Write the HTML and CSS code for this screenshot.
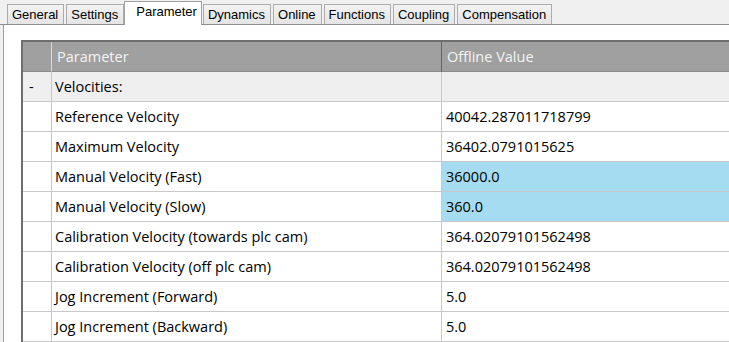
FILE: index.html
```html
<!DOCTYPE html>
<html lang="en">
<head>
  <meta charset="UTF-8" />
  <meta name="viewport" content="width=device-width, initial-scale=1.0" />
  <title>Axis Parameter</title>
  <link rel="stylesheet" href="styles.css">
</head>
<body>

  <!-- Abas -->
  <div class="tabs">
    <div class="tab">General</div>
    <div class="tab">Settings</div>
    <div class="tab active">Parameter</div>
    <div class="tab">Dynamics</div>
    <div class="tab">Online</div>
    <div class="tab">Functions</div>
    <div class="tab">Coupling</div>
    <div class="tab">Compensation</div>
  </div>

  <div class="panel">
    <div class="grid">
      <div class="row head">
        <div class="cell c1"></div>
        <div class="cell c2">Parameter</div>
        <div class="cell c3">Offline Value</div>
      </div>

      <div class="row group">
        <div class="cell c1">-</div>
        <div class="cell c2">Velocities:</div>
        <div class="cell c3"></div>
      </div>

      <div class="row">
        <div class="cell c1"></div>
        <div class="cell c2">Reference Velocity</div>
        <div class="cell c3">40042.287011718799</div>
      </div>
      <div class="row">
        <div class="cell c1"></div>
        <div class="cell c2">Maximum Velocity</div>
        <div class="cell c3">36402.0791015625</div>
      </div>
      <div class="row">
        <div class="cell c1"></div>
        <div class="cell c2">Manual Velocity (Fast)</div>
        <div class="cell c3 selected">36000.0</div>
      </div>
      <div class="row">
        <div class="cell c1"></div>
        <div class="cell c2">Manual Velocity (Slow)</div>
        <div class="cell c3 selected">360.0</div>
      </div>
      <div class="row">
        <div class="cell c1"></div>
        <div class="cell c2">Calibration Velocity (towards plc cam)</div>
        <div class="cell c3">364.02079101562498</div>
      </div>
      <div class="row">
        <div class="cell c1"></div>
        <div class="cell c2">Calibration Velocity (off plc cam)</div>
        <div class="cell c3">364.02079101562498</div>
      </div>
      <div class="row">
        <div class="cell c1"></div>
        <div class="cell c2">Jog Increment (Forward)</div>
        <div class="cell c3">5.0</div>
      </div>
      <div class="row">
        <div class="cell c1"></div>
        <div class="cell c2">Jog Increment (Backward)</div>
        <div class="cell c3">5.0</div>
      </div>
    </div>
  </div>

</body>
</html>
```

FILE: styles.css
```css
/* janela base */
body {
  margin: 0;
  background: #f0f0f0;
  overflow: hidden;
  height: 342px;
}

/* barra de abas */
.tabs {
  display: flex;
  align-items: flex-end;
  height: 24px;
  padding-left: 7px;
  border-bottom: 1px solid #8c8e94;
  font-family: "Liberation Sans", Arial, sans-serif;
  font-size: 13px;
}

.tab {
  height: 20px;
  line-height: 19px;
  padding: 0 5px 0 4px;
  margin-right: 2px;
  border: 1px solid #acacac;
  border-bottom: none;
  background: linear-gradient(#f3f3f3, #e4e4e4);
  color: #000;
  box-sizing: border-box;
}

.tab.active {
  height: 24px;
  line-height: 19px;
  margin: 0 1px -1px -2px;
  padding: 0 4px 0 11px;
  background: #fff;
  border-color: #a0a0a0;
  position: relative;
}

/* painel */
.panel {
  box-sizing: border-box;
  background: #fff;
  margin-left: 3px;
  border-left: 1px solid #a0a0a0;
  padding: 15px 0 0 17px;
  height: 317px;
  overflow: hidden;
}

.grid {
  border-top: 2px solid #6e6e6e;
  border-left: 2px solid #6e6e6e;
  font-family: "Open Sans", "Noto Sans", sans-serif;
  font-size: 14.5px;
  color: #000;
}

.row {
  display: grid;
  grid-template-columns: 29px 390px 1fr;
  height: 30px;
}

.cell {
  box-sizing: border-box;
  border-right: 1px solid #c8c8c8;
  border-bottom: 1px solid #c8c8c8;
  padding-left: 3px;
  line-height: 29px;
  white-space: nowrap;
}

.c1 {
  padding-left: 6px;
}

.c3 {
  padding-left: 4px;
  border-right: none;
}

.row.head .cell {
  background: #a0a0a0;
  color: #f4f4f4;
  border-bottom-color: #8a8a8a;
}

.row.head .c1 {
  border-right-color: #d6d6d6;
}

.row.head .c2 {
  border-right-color: #646464;
  padding-left: 5px;
}

.row.head .c3 {
  padding-left: 5px;
}

.row.group .cell {
  background: #efefef;
}

.cell.selected {
  background: #a6dcf2;
}
```
